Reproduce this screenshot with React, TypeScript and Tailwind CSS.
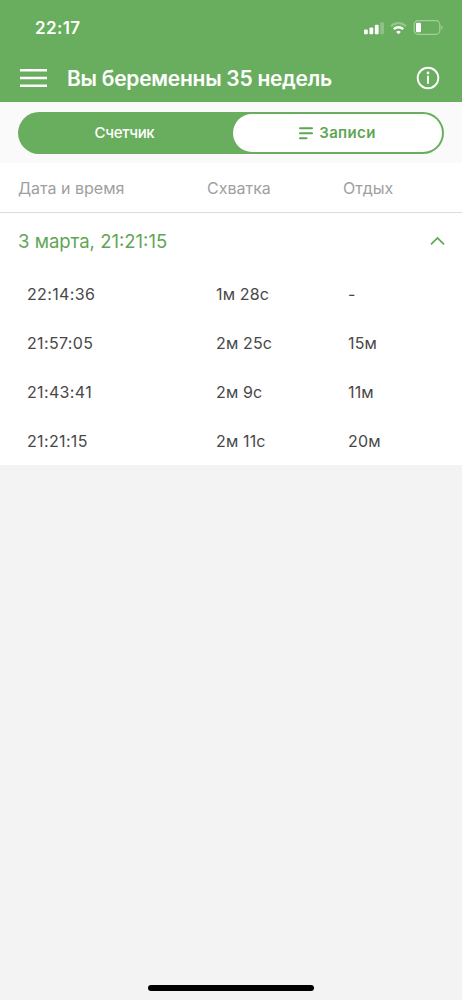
import { useState } from 'react';

const COLUMNS = ['Дата и время', 'Схватка', 'Отдых'];

const RECORDS = [
  { time: '22:14:36', duration: '1м 28с', rest: '-' },
  { time: '21:57:05', duration: '2м 25с', rest: '15м' },
  { time: '21:43:41', duration: '2м 9с', rest: '11м' },
  { time: '21:21:15', duration: '2м 11с', rest: '20м' },
];

function StatusBar() {
  return (
    <div className="flex h-[54px] items-center justify-between pl-[35px] pr-[19px] pt-[1px]">
      <span className="text-[17px] font-semibold leading-5 tracking-[0.35px]">22:17</span>
      <div className="flex items-center">
        <svg className="mr-[6px]" width="20" height="14" viewBox="0 0 21 14" fill="currentColor">
          <rect x="0" y="8.5" width="4" height="5" rx="1" />
          <rect x="5.7" y="6.5" width="4" height="7" rx="1" />
          <rect x="11.4" y="3.7" width="4" height="9.8" rx="1" />
          <rect x="17" y="1" width="4" height="12.5" rx="1" opacity="0.25" />
        </svg>
        <svg className="mr-[6px]" width="17" height="14" viewBox="0 0 17 14" fill="none" stroke="currentColor">
          <path d="M1 5.2a10.8 10.8 0 0 1 15 0" strokeWidth="2.2" opacity="0.3" />
          <path d="M3.8 8.2a6.8 6.8 0 0 1 9.4 0" strokeWidth="2.4" />
          <path d="M8.5 13.3 6.2 10.9a3.3 3.3 0 0 1 4.6 0z" fill="currentColor" stroke="none" />
        </svg>
        <svg width="30" height="15" viewBox="0 0 30 15" fill="none">
          <rect x="1.2" y="0.7" width="25.6" height="13.6" rx="3.8" stroke="currentColor" strokeWidth="1.2" opacity="0.4" />
          <rect x="3" y="2.7" width="5" height="9.6" rx="1.2" fill="currentColor" />
          <path d="M28.3 5.5v4c.8-.3 1.2-1 1.2-2s-.4-1.7-1.2-2z" fill="currentColor" opacity="0.45" />
        </svg>
      </div>
    </div>
  );
}

export default function App() {
  const [tab, setTab] = useState<'counter' | 'records'>('records');
  const [open, setOpen] = useState(true);

  return (
    <div className="flex h-[1000px] w-[462px] flex-col overflow-hidden bg-[#f3f3f3] font-['Inter','Noto_Sans',sans-serif]">
      <header className="h-[102px] bg-[#69ae5e] text-white">
        <StatusBar />
        <div className="flex h-12 items-center pl-5 pr-[22px]">
          <button type="button" className="mr-[20px]" aria-label="Меню">
            <svg width="27" height="20" viewBox="0 0 27 20" stroke="currentColor" strokeWidth="2.4">
              <path d="M0 2.2h27M0 10h27M0 17.8h27" />
            </svg>
          </button>
          <h1 className="whitespace-nowrap pt-[1px] text-[21px] font-semibold leading-[25px] tracking-[-0.27px]">Вы беременны 35 недель</h1>
          <button type="button" className="ml-auto" aria-label="Информация">
            <svg width="24" height="24" viewBox="0 0 24 24" fill="none" stroke="currentColor">
              <circle cx="12" cy="12" r="10.3" strokeWidth="1.9" />
              <path d="M12 10.6v6.4" strokeWidth="2" strokeLinecap="round" />
              <circle cx="12" cy="7" r="1.4" fill="currentColor" stroke="none" />
            </svg>
          </button>
        </div>
      </header>

      <div className="h-[61px] bg-[#fafafa] px-[18px] pt-[10px]">
        <div className="flex h-[42px] rounded-full bg-[#69ae5e] p-[2px] text-[15px] leading-5">
          <button
            type="button"
            onClick={() => setTab('counter')}
            className={`flex flex-1 items-center justify-center rounded-full pr-[4px] font-medium tracking-[-0.3px] ${
              tab === 'counter' ? 'bg-white text-[#5fa654]' : 'text-white'
            }`}
          >
            Счетчик
          </button>
          <button
            type="button"
            onClick={() => setTab('records')}
            className={`flex w-[209px] items-center justify-center gap-[6px] rounded-full font-semibold tracking-[0.35px] ${
              tab === 'records' ? 'bg-white text-[#5fa654]' : 'text-white'
            }`}
          >
            <svg width="14" height="13" viewBox="0 0 14 13" stroke="currentColor" strokeWidth="2" strokeLinecap="round">
              <path d="M1 1.3h12M1 6.3h12M1 11.3h6.5" />
            </svg>
            Записи
          </button>
        </div>
      </div>

      <div className="grid h-[50px] grid-cols-[189px_136px_1fr] items-center border-b border-[#dcdcdc] bg-white pl-[18px] text-[16px] leading-5 text-[#a0a0a0]">
        {COLUMNS.map((name) => (
          <span key={name}>{name}</span>
        ))}
      </div>

      <section className="bg-white">
        <button
          type="button"
          onClick={() => setOpen(!open)}
          className="flex h-14 w-full items-center justify-between pl-[18px] pr-[17px] text-[18.5px] leading-6 text-[#5fa654]"
        >
          3 марта, 21:21:15
          <svg className={open ? '' : 'rotate-180'} width="15" height="10" viewBox="0 0 15 10" fill="none" stroke="currentColor" strokeWidth="1.7">
            <path d="M1 8.4 7.5 2 14 8.4" />
          </svg>
        </button>
        {open &&
          RECORDS.map((record) => (
            <div
              key={record.time}
              className="grid h-[49px] grid-cols-[189px_132px_1fr] items-center pl-[27px] text-[16px] leading-5 text-[#484848]"
            >
              <span className="tracking-[0.35px]">{record.time}</span>
              <span className="tracking-[0.15px]">{record.duration}</span>
              <span className="tracking-[0.15px]">{record.rest}</span>
            </div>
          ))}
      </section>

      <div className="mx-auto mb-[9px] mt-auto h-[6px] w-[166px] rounded-full bg-black" />
    </div>
  );
}
